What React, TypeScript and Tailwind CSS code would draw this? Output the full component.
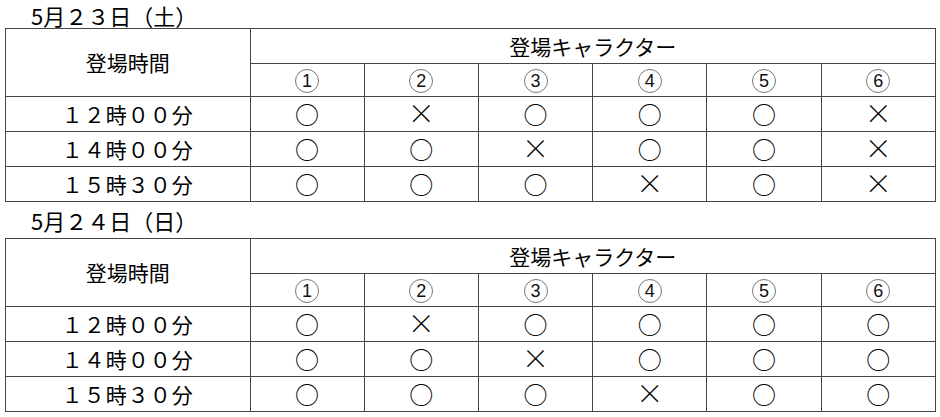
const DAYS = [
  {
    title: "5月２３日（土）",
    rows: [
      { time: "１２時００分", marks: ["○", "×", "○", "○", "○", "×"] },
      { time: "１４時００分", marks: ["○", "○", "×", "○", "○", "×"] },
      { time: "１５時３０分", marks: ["○", "○", "○", "×", "○", "×"] },
    ],
  },
  {
    title: "5月２４日（日）",
    rows: [
      { time: "１２時００分", marks: ["○", "×", "○", "○", "○", "○"] },
      { time: "１４時００分", marks: ["○", "○", "×", "○", "○", "○"] },
      { time: "１５時３０分", marks: ["○", "○", "○", "×", "○", "○"] },
    ],
  },
];

const NUMS = ["1", "2", "3", "4", "5", "6"];

function Circled({ n }: { n: string }) {
  return (
    <div className="flex h-[24px] w-[24px] min-w-[24px] items-center justify-center rounded-full border border-[#777] font-['Liberation_Sans',sans-serif] text-[18px] font-normal leading-none text-[#111]">
      {n}
    </div>
  );
}

function Mark({ m }: { m: string }) {
  if (m === "×") {
    return <span className="inline-block h-[22px] text-[27px] font-light leading-[22px]">×</span>;
  }
  return <span className="inline-block h-[22px] text-[24px] leading-[22px]">○</span>;
}

function ScheduleTable({ rows }: { rows: (typeof DAYS)[number]["rows"] }) {
  return (
    <table className="w-[931px] table-fixed border-collapse text-center text-[21px] font-normal leading-none text-black">
      <colgroup>
        <col className="w-[244px]" />
        {NUMS.map((n) => (
          <col key={n} className="w-[114px]" />
        ))}
      </colgroup>
      <thead>
        <tr className="h-[35px]">
          <th rowSpan={2} className="border border-[#444] font-normal">
            登場時間
          </th>
          <th colSpan={6} className="border border-[#444] font-normal">
            登場キャラクター
          </th>
        </tr>
        <tr className="h-[33px]">
          {NUMS.map((n) => (
            <th key={n} className="border border-[#444] pt-[2px] align-middle">
              <div className="flex justify-center">
                <Circled n={n} />
              </div>
            </th>
          ))}
        </tr>
      </thead>
      <tbody>
        {rows.map((r) => (
          <tr key={r.time} className="h-[35px]">
            <td className="border border-[#444] tracking-[1px]">{r.time}</td>
            {r.marks.map((m, i) => (
              <td key={i} className="border border-[#444]">
                <Mark m={m} />
              </td>
            ))}
          </tr>
        ))}
      </tbody>
    </table>
  );
}

export default function App() {
  return (
    <div className="h-[417px] w-[940px] bg-white pl-[5px] font-['Noto_Sans_CJK_JP','Noto_Sans',sans-serif]">
      <div className="flex h-[28px] items-center pl-[26px] pt-[2px] text-[22px] leading-[24px] text-black">
        {DAYS[0].title}
      </div>
      <ScheduleTable rows={DAYS[0].rows} />
      <div className="flex h-[36px] items-center pl-[26px] text-[22px] leading-[24px] text-black">
        {DAYS[1].title}
      </div>
      <ScheduleTable rows={DAYS[1].rows} />
    </div>
  );
}
